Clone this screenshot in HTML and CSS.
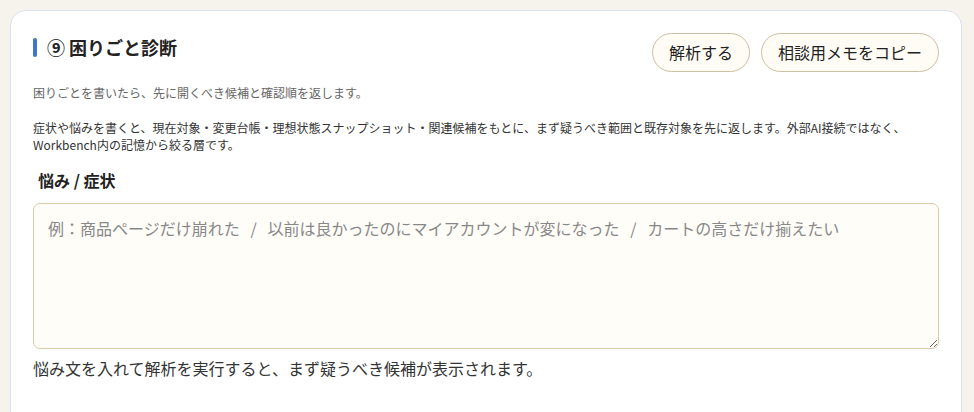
FILE: index.html
```html
<!DOCTYPE html>
<html lang="ja">
<head>
    <meta charset="UTF-8">
    <meta name="viewport" content="width=device-width, initial-scale=1.0">
    <title>困りごと診断</title>
    <link rel="stylesheet" href="styles.css">
</head>
<body>
    <section class="card">
        <div class="card-head">
            <h2 class="card-title">⑨ 困りごと診断</h2>
            <div class="actions">
                <button class="pill-btn">解析する</button>
                <button class="pill-btn">相談用メモをコピー</button>
            </div>
        </div>
        <p class="lead">困りごとを書いたら、先に開くべき候補と確認順を返します。</p>
        <p class="desc">症状や悩みを書くと、現在対象・変更台帳・理想状態スナップショット・関連候補をもとに、まず疑うべき範囲と既存対象を先に返します。外部AI接続ではなく、Workbench内の記憶から絞る層です。</p>
        <label class="field-label" for="trouble">悩み / 症状</label>
        <textarea id="trouble" class="trouble-input" placeholder="例：商品ページだけ崩れた   /   以前は良かったのにマイアカウントが変になった   /   カートの高さだけ揃えたい"></textarea>
        <p class="hint">悩み文を入れて解析を実行すると、まず疑うべき候補が表示されます。</p>
    </section>
</body>
</html>
```

FILE: styles.css
```css
body {
    margin: 0;
    padding: 10px 12px 0 10px;
    background-color: #f6f3ec;
    font-family: "Noto Sans CJK JP", "Noto Sans", sans-serif;
    color: #222;
}
.card {
    background-color: #fff;
    border: 1px solid #d9e2f2;
    border-radius: 16px;
    padding: 22px 22px 60px;
}
.card-head {
    display: flex;
    justify-content: space-between;
    align-items: flex-start;
}
.card-title {
    display: flex;
    align-items: center;
    gap: 10px;
    margin: 2px 0 0;
    font-size: 18px;
    font-weight: 600;
    line-height: 24px;
}
.card-title::before {
    content: "";
    width: 4px;
    height: 19px;
    border-radius: 2px;
    background-color: #3d78c4;
}
.actions {
    display: flex;
    gap: 11px;
}
.pill-btn {
    padding: 8px 16px;
    font-family: inherit;
    font-size: 16px;
    line-height: 21px;
    color: #222;
    background-color: #fffcf5;
    border: 1px solid #cdbfa3;
    border-radius: 999px;
    cursor: pointer;
}
.lead {
    margin: 12px 0 0;
    font-size: 12px;
    line-height: 18px;
    color: #666;
}
.desc {
    margin: 17px 0 0;
    font-size: 12px;
    line-height: 17px;
    color: #333;
}
.field-label {
    display: block;
    margin: 16px 0 0;
    padding-left: 5px;
    font-size: 16px;
    font-weight: 700;
    line-height: 22px;
    color: #222;
}
.trouble-input {
    display: block;
    box-sizing: border-box;
    width: 100%;
    height: 146px;
    margin-top: 12px;
    padding: 12px 14px;
    font-family: inherit;
    font-size: 16px;
    line-height: 24px;
    color: #222;
    background-color: #fffdf8;
    border: 1px solid #dccaa8;
    border-radius: 7px;
}
.trouble-input::placeholder {
    color: #888;
}
.hint {
    margin: 8px 0 0;
    font-size: 16px;
    line-height: 22px;
    color: #333;
}
```
